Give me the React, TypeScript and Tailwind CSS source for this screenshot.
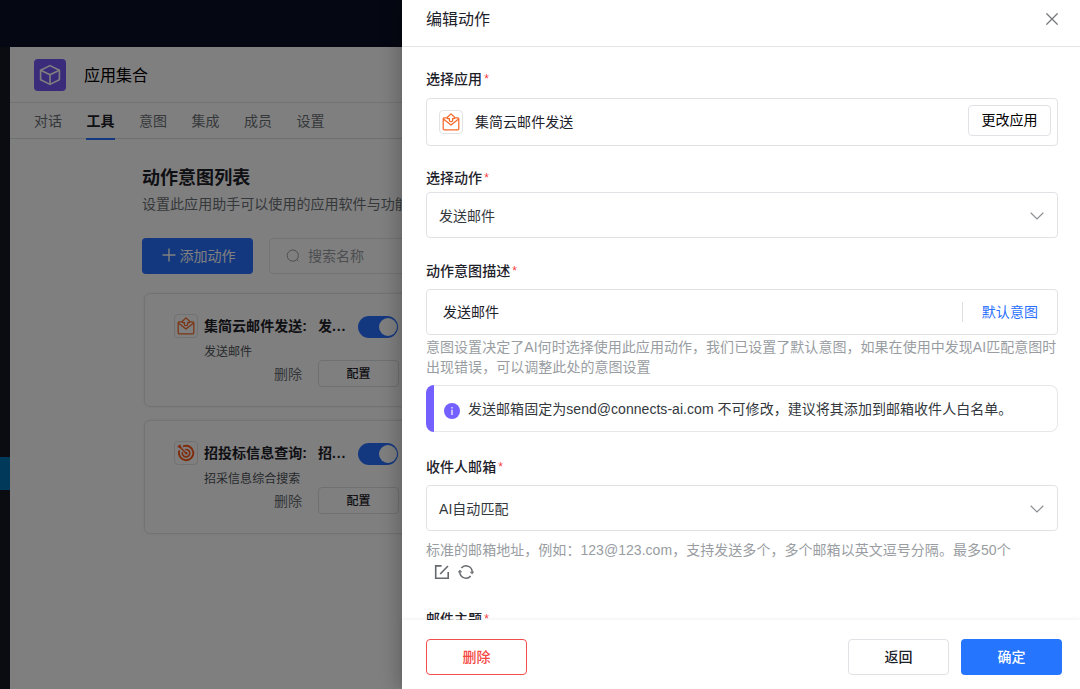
import type { ReactNode } from "react";

const TABS = ["对话", "工具", "意图", "集成", "成员", "设置"];

function MailIcon({ className }: { className?: string }) {
  return (
    <svg viewBox="0 0 18 18" className={className} fill="none" stroke="#f5692a" strokeWidth="1.25" strokeLinejoin="round">
      <path d="M5 4.8H2.2Q1.2 4.8 1.2 5.8V15.8Q1.2 16.8 2.2 16.8H15.8Q16.8 16.8 16.8 15.8V5.8Q16.8 4.8 15.8 4.8H13" />
      <path d="M1.4 6.1L9 12.1L16.6 6.1" />
      <path d="M7.4 8V5.6H5.6V4L9 0.9L12.4 4V5.6H10.6V8L9 8.8Z" />
    </svg>
  );
}

function TargetIcon({ className }: { className?: string }) {
  return (
    <svg viewBox="0 0 20 20" className={className} fill="none" stroke="#ff5a1a" strokeWidth="2.2" strokeLinecap="round">
      <path d="M7.6 2.4A8 8 0 1 1 2.4 8" />
      <path d="M9.8 6.1A4.1 4.1 0 1 1 6 9.6" strokeWidth="1.9" />
      <circle cx="10.2" cy="10.2" r="1.4" fill="#ff5a1a" stroke="none" />
      <path d="M3 3L10 10" strokeWidth="1.6" />
      <path d="M1.4 3L4.6 4.7L3.2 1.4Z" strokeWidth="1.4" fill="#ff5a1a" />
    </svg>
  );
}

function ChevronIcon() {
  return (
    <svg viewBox="0 0 14 8" className="h-2 w-3.5" fill="none" stroke="#8b8f94" strokeWidth="1.2">
      <path d="M0.7 0.8L7 7L13.3 0.8" />
    </svg>
  );
}

function AppIcon({ children }: { children: ReactNode }) {
  return (
    <div className="flex size-6 shrink-0 items-center justify-center rounded border border-[#e2e3e5] bg-white">
      {children}
    </div>
  );
}

function Label({ children, className }: { children: ReactNode; className: string }) {
  return (
    <div className={`flex h-5 items-center text-[14px] leading-5 font-medium text-[#1d2129] ${className}`}>
      {children}
      <span className="ml-0.5 h-5 text-[12px] leading-5 font-normal text-[#f53f3f]">*</span>
    </div>
  );
}

function ActionCard({
  icon,
  title,
  short,
  desc,
}: {
  icon: ReactNode;
  title: string;
  short: string;
  desc: string;
}) {
  return (
    <div className="flex h-[114px] w-[282px] flex-col rounded-md border border-[#e4e6e8] pt-[20px] pr-[26px] pl-[29px] shadow-[0_0_3px_rgba(0,0,0,0.08)]">
      <div className="flex h-6 items-center">
        <AppIcon>{icon}</AppIcon>
        <span className="ml-1.5 w-[103px] text-[14px] leading-5 font-bold whitespace-nowrap text-[#1d2129]">
          {title}:
        </span>
        <span className="ml-[11px] w-[40px] text-[14px] leading-5 font-bold whitespace-nowrap text-[#1d2129]">
          {short}
          <span className="tracking-[0.8px]">...</span>
        </span>
        <div className="mt-0.5 flex h-[22px] w-10 shrink-0 items-center justify-end rounded-full bg-[#2970ff] px-px">
          <div className="size-[18px] rounded-full bg-white" />
        </div>
      </div>
      <div className="mt-1 ml-[30px] text-[12px] leading-5 text-[#4e5359]">{desc}</div>
      <div className="-mt-0.5 flex h-[27px] items-center justify-end">
        <span className="mt-px mr-4 text-[14px] leading-5 text-[#6b7075]">删除</span>
        <button className="h-[27px] w-[81px] rounded border border-[#dfe1e4] text-[12px] leading-5 font-medium text-[#1d2129]">
          配置
        </button>
      </div>
    </div>
  );
}

function AssistantPage() {
  return (
    <div className="flex h-full flex-col bg-[#0a1024] pt-[47px]">
      <div className="flex flex-1">
        <div className="w-2.5 shrink-0 bg-[#161824] pt-[410px]">
          <div className="h-[33px] bg-[#0072b4]" />
        </div>
        <div className="flex-1 bg-white">
          <div className="flex h-14 items-center border-b border-[#e6e7e9] pl-6">
            <div className="flex size-8 items-center justify-center rounded bg-[#7558f5]">
              <svg viewBox="0 0 24 24" className="size-6" fill="none" stroke="#ffffff" strokeWidth="1.6" strokeLinejoin="round">
                <path d="M12 2.6L21.4 7.2V16.8L12 21.4L2.6 16.8V7.2Z" />
                <path d="M2.6 7.2L12 11.8L21.4 7.2M12 11.8V21.4" />
              </svg>
            </div>
            <span className="mt-0.5 ml-[18px] text-[16px] leading-6 text-black">应用集合</span>
          </div>
          <div className="flex h-9 gap-[24.4px] border-b border-[#dcdee1] pl-6 text-[14px] leading-[37px] text-[#6b7075]">
            {TABS.map((tab) =>
              tab === "工具" ? (
                <span key={tab} className="h-[37px] border-b-2 border-[#2970ff] font-bold text-[#1d2129]">
                  {tab}
                </span>
              ) : (
                <span key={tab}>{tab}</span>
              )
            )}
          </div>
          <div className="pt-[27px] pl-[132px]">
            <h2 className="text-[18px] leading-6 font-bold text-[#1d2129]">动作意图列表</h2>
            <p className="mt-1 text-[14px] leading-5 whitespace-nowrap text-[#6b7075]">
              设置此应用助手可以使用的应用软件与功能
            </p>
            <div className="mt-6 flex gap-4">
              <button className="flex h-9 w-[111px] items-center justify-center gap-[3px] rounded bg-[#2970ff] pl-[3px] text-[14px] leading-5 text-white">
                <svg viewBox="0 0 14 14" className="mb-0.5 size-3.5" fill="none" stroke="currentColor" strokeWidth="1.4">
                  <path d="M7 0.5V13.5M0.5 7H13.5" />
                </svg>
                添加动作
              </button>
              <div className="flex h-9 w-[220px] items-center rounded border border-[#e4e6e8] pl-4 text-[14px] leading-5 text-[#999da2]">
                <svg viewBox="0 0 14 14" className="mr-2 size-3.5" fill="none" stroke="#999da2" strokeWidth="1">
                  <circle cx="6.8" cy="6.6" r="5.6" />
                  <path d="M10.8 10.6L12.4 12.2" />
                </svg>
                搜索名称
              </div>
            </div>
            <div className="mt-[19px] ml-0.5 flex flex-col gap-[13px]">
              <ActionCard
                icon={<MailIcon className="size-[18px]" />}
                title="集简云邮件发送"
                short="发"
                desc="发送邮件"
              />
              <ActionCard
                icon={<TargetIcon className="size-[18px]" />}
                title="招投标信息查询"
                short="招"
                desc="招采信息综合搜索"
              />
            </div>
          </div>
        </div>
      </div>
    </div>
  );
}

function EditDrawer() {
  return (
    <div className="absolute inset-y-0 right-0 flex w-[678px] flex-col bg-white shadow-[-6px_0_16px_rgba(0,0,0,0.2)]">
      <div className="flex h-[47px] shrink-0 items-center justify-between border-b border-[#e3e4e6] pr-[22px] pb-2 pl-6">
        <span className="mt-px text-[16px] leading-6 text-[#1d2129]">编辑动作</span>
        <svg viewBox="0 0 12 12" className="size-3" fill="none" stroke="#75797e" strokeWidth="1.3">
          <path d="M0.4 0.4L11.6 11.6M11.6 0.4L0.4 11.6" />
        </svg>
      </div>

      <div className="min-h-0 flex-1 overflow-hidden pr-[22px] pl-6">
        <Label className="mt-[22px]">选择应用</Label>
        <div className="mt-[9px] flex h-12 rounded border border-[#e0e2e5] pt-1.5 pr-1.5 pl-3">
          <div className="flex h-[34px] flex-1 items-center">
            <AppIcon>
              <MailIcon className="size-[18px]" />
            </AppIcon>
            <span className="ml-3 text-[14px] leading-5 text-[#1d2129]">集简云邮件发送</span>
          </div>
          <button className="h-[31px] w-[83px] rounded border border-[#e0e2e5] pb-px text-[14px] leading-5 text-black">
            更改应用
          </button>
        </div>

        <Label className="mt-[22px]">选择动作</Label>
        <div className="mt-1 flex h-[46px] items-center justify-between rounded border border-[#e0e2e5] pt-px pr-[13px] pl-3 text-[14px] leading-5 text-[#33383d]">
          发送邮件
          <ChevronIcon />
        </div>

        <Label className="mt-[23px]">动作意图描述</Label>
        <div className="mt-2 flex h-[46px] items-center rounded border border-[#e0e2e5] pr-[19px] pl-4 text-[14px] leading-5 text-[#1d2129]">
          <span className="flex-1">发送邮件</span>
          <span className="h-5 border-l border-[#dcdee1] pl-[19px] leading-5 text-[#2970ff]">默认意图</span>
        </div>
        <p className="mt-0.5 text-[14px] leading-5 text-[#999da2]">
          意图设置决定了AI何时选择使用此应用动作，我们已设置了默认意图，如果在使用中发现AI匹配意图时出现错误，可以调整此处的意图设置
        </p>
        <div className="mt-2 flex h-[47px]">
          <div className="w-2 shrink-0 rounded-l-lg bg-[#7460ff]" />
          <div className="flex flex-1 items-center rounded-r-lg border border-l-0 border-[#e6e7e9]">
            <div className="mt-[5px] ml-2.5 flex size-4 items-center justify-center rounded-full bg-[#7460ff]">
              <svg viewBox="0 0 16 16" className="size-4" fill="#ffffff">
                <rect x="7.4" y="4" width="1.2" height="1.5" />
                <rect x="7.4" y="6.7" width="1.2" height="5.3" />
              </svg>
            </div>
            <span className="ml-2 text-[14px] leading-5 text-[#33383d]">
              发送邮箱固定为send@connects-ai.com 不可修改，建议将其添加到邮箱收件人白名单。
            </span>
          </div>
        </div>

        <Label className="mt-[25px]">收件人邮箱</Label>
        <div className="mt-2 flex h-[46px] items-center justify-between rounded border border-[#e0e2e5] pt-px pr-[13px] pl-3 text-[14px] leading-5 text-[#33383d]">
          AI自动匹配
          <ChevronIcon />
        </div>
        <p className="mt-[9px] text-[14px] leading-5 text-[#999da2]">
          标准的邮箱地址，例如：123@123.com，支持发送多个，多个邮箱以英文逗号分隔。最多50个
        </p>
        <div className="mt-1 flex gap-2 pl-2">
          <svg viewBox="0 0 16 16" className="size-4" fill="none" stroke="#66696d" strokeWidth="1.6">
            <path d="M7.6 1.9H1.7V14.3H14.2V8" />
            <path d="M6.2 10L14 2" />
          </svg>
          <svg viewBox="0 0 16 16" className="size-4" fill="none" stroke="#66696d" strokeWidth="1.5">
            <path d="M3.4 4A6.1 6.1 0 0 1 14.1 8.6" />
            <path d="M12.6 12A6.1 6.1 0 0 1 1.9 7.4" />
            <path d="M12.4 7.8L14.1 9.4L15.6 7.6M0.4 8.4L1.9 6.6L3.6 8.2" strokeWidth="1.1" />
          </svg>
        </div>

        <Label className="mt-[29px]">邮件主题</Label>
      </div>

      <div className="flex h-[69px] shrink-0 items-start gap-3 bg-white pt-[19px] pr-[18px] pl-6 text-[14px] leading-5 shadow-[0_-1px_4px_rgba(0,0,0,0.06)]">
        <button className="h-9 w-[101px] rounded border border-[#f04f4b] font-medium text-[#f5483f]">删除</button>
        <div className="flex-1" />
        <button className="h-9 w-[101px] rounded border border-[#e0e2e5] font-medium text-[#1d2129]">返回</button>
        <button className="h-9 w-[101px] rounded bg-[#2675ff] font-medium text-white">确定</button>
      </div>
    </div>
  );
}

export default function App() {
  return (
    <div className="relative h-[689px] w-[1080px] overflow-hidden tracking-[0.04px] font-['Liberation_Sans','Noto_Sans_CJK_SC',sans-serif]">
      <AssistantPage />
      <div className="absolute inset-0 bg-black/50" />
      <EditDrawer />
    </div>
  );
}
